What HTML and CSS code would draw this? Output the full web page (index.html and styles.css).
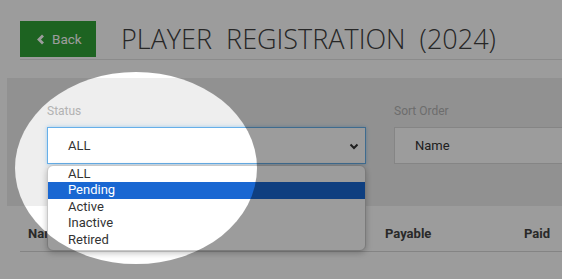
FILE: index.html
```html
<!DOCTYPE html>
<html lang="en">
<head>
    <meta charset="UTF-8">
    <title>Player Registration</title>
    <link rel="stylesheet" href="styles.css">
</head>
<body>
    <div class="page-head">
        <a class="btn-back" href="#">
            <svg width="8" height="11" viewBox="0 0 8 11"><polyline points="6,1.5 2,5.5 6,9.5" fill="none" stroke="#fff" stroke-width="2.8"/></svg>
            Back
        </a>
        <h1>PLAYER&nbsp; REGISTRATION&nbsp; (2024)</h1>
    </div>

    <div class="filters">
        <div class="field">
            <label>Status</label>
            <div class="select focused">
                ALL
                <svg class="caret" width="10" height="7" viewBox="0 0 10 7"><polyline points="1.5,1.5 5,5 8.5,1.5" fill="none" stroke="#333" stroke-width="2"/></svg>
            </div>
            <ul class="options">
                <li>ALL</li>
                <li class="active">Pending</li>
                <li>Active</li>
                <li>Inactive</li>
                <li>Retired</li>
            </ul>
        </div>
        <div class="field wide">
            <label>Sort Order</label>
            <div class="select">Name</div>
        </div>
    </div>

    <div class="table-head">
        <span>Name</span>
        <span>Payable</span>
        <span>Paid</span>
    </div>

    <!-- spotlight over the status filter -->
    <div class="spotlight"></div>
</body>
</html>
```

FILE: styles.css
```css
body {
    margin: 0;
    width: 562px;
    height: 279px;
    overflow: hidden;
    position: relative;
    background: #fff;
    font-family: Roboto, "Liberation Sans", sans-serif;
    color: #333;
}
.page-head {
    display: flex;
    align-items: center;
    margin: 21px 0 0 20px;
    padding-bottom: 2px;
    border-bottom: 1px solid #e3e3e3;
}
.btn-back {
    display: flex;
    align-items: center;
    gap: 7px;
    box-sizing: border-box;
    width: 76px;
    height: 36px;
    padding-left: 17px;
    background: #30a236;
    color: #fff;
    font-size: 13.5px;
    text-decoration: none;
}
.page-head h1 {
    margin: 0 0 0 25px;
    font-family: "Open Sans", sans-serif;
    font-weight: 300;
    font-size: 27px;
    line-height: 34px;
    color: #404040;
    white-space: nowrap;
}
.filters {
    display: flex;
    gap: 28px;
    margin: 18px 0 0 7px;
    width: 640px;
    height: 128px;
    box-sizing: border-box;
    padding: 26px 0 0 40px;
    background: #eee;
}
.field {
    position: relative;
    flex-shrink: 0;
    width: 319px;
}
.field.wide {
    width: 260px;
}
.field label {
    display: block;
    font-size: 12px;
    line-height: 14px;
    color: #b2b2b2;
}
.select {
    position: relative;
    box-sizing: border-box;
    height: 37px;
    margin-top: 9px;
    padding: 0 20px;
    line-height: 35px;
    font-size: 13px;
    background: #fff;
    border: 1px solid #dadada;
}
.select.focused {
    border-color: #66afe9;
    box-shadow: 0 0 4px rgba(102, 175, 233, .6);
}
.caret {
    position: absolute;
    right: 6px;
    top: 15px;
}
.options {
    position: absolute;
    left: 0;
    top: 61px;
    width: 319px;
    box-sizing: border-box;
    margin: 0;
    padding: 0 0 2px;
    list-style: none;
    background: #fff;
    border: 1px solid #c8c8c8;
    border-radius: 6px;
    box-shadow: 0 2px 6px rgba(0, 0, 0, .25);
    font-size: 13px;
    z-index: 2;
}
.options li {
    height: 16.4px;
    line-height: 16px;
    padding-left: 20px;
}
.options li.active {
    background: #1967d2;
    color: #fff;
}
.table-head {
    display: grid;
    grid-template-columns: 357px 139px auto;
    margin-left: 20px;
    padding: 20px 0 10px 8px;
    border-bottom: 1px solid #d8d8d8;
    font-size: 13px;
    font-weight: bold;
    color: #444;
}
.spotlight {
    position: absolute;
    left: 15px;
    top: 72px;
    width: 242px;
    height: 192px;
    border-radius: 50%;
    box-shadow: 0 0 6px 700px rgba(0, 0, 0, .39);
    z-index: 5;
}
```
